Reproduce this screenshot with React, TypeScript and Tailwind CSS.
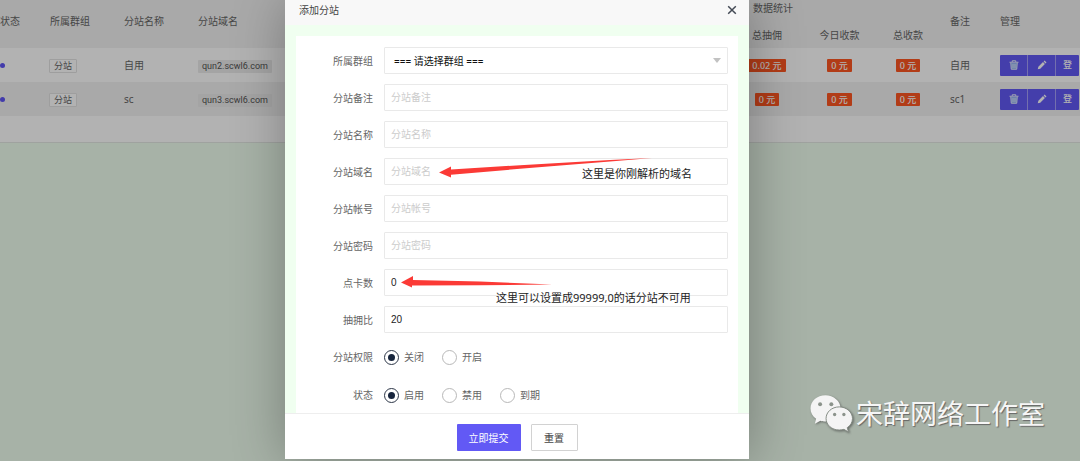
import React, { useState } from 'react';

const rows = [
	{ name: '自用', domain: 'qun2.scwl6.com', stats: ['0.02 元', '0 元', '0 元'], remark: '自用' },
	{ name: 'sc', domain: 'qun3.scwl6.com', stats: ['0 元', '0 元', '0 元'], remark: 'sc1' },
];

const fields = [
	{ id: 'remark', label: '分站备注', value: '' },
	{ id: 'name', label: '分站名称', value: '' },
	{ id: 'domain', label: '分站域名', value: '' },
	{ id: 'account', label: '分站帐号', value: '' },
	{ id: 'password', label: '分站密码', value: '' },
	{ id: 'points', label: '点卡数', value: '0' },
	{ id: 'rate', label: '抽拥比', value: '20' },
];

const radios = [
	{ id: 'access', label: '分站权限', options: ['关闭', '开启'] },
	{ id: 'status', label: '状态', options: ['启用', '禁用', '到期'] },
];

function TrashIcon() {
	return (
		<svg viewBox="0 0 20 20" className="size-[10px]" fill="none" stroke="#e4ecff" strokeWidth="2">
			<path d="M3.500 6h13l-1 12.500h-11z" fill="#8fb2f5" stroke="none" />
			<path d="M1 4.500h18M6.500 4V1.500h7V4M3.500 5l1 13.500h11l1-13.500M8 7.500v8.500M12 7.500v8.500" />
		</svg>
	);
}

function PencilIcon() {
	return (
		<svg viewBox="0 0 20 20" className="size-[10px]" fill="#fff">
			<path d="M1.500 18.500l1.200-5L12 4.200l3.800 3.800-9.300 9.300zM13.200 3l2-2 3.800 3.800-2 2z" />
		</svg>
	);
}

function SiteTable() {
	return (
		<div className="bg-white pb-[26px] border-b border-[#e4e8e4] overflow-hidden">
			<table className="w-full table-fixed -mt-[6px] text-left text-[10px] leading-4 text-[#666]">
				<colgroup>
					<col className="w-10" />
					<col className="w-[74px]" />
					<col className="w-[74px]" />
					<col />
					<col className="w-[74px]" />
					<col className="w-[71px]" />
					<col className="w-[66px]" />
					<col className="w-[50px]" />
					<col className="w-[90px]" />
				</colgroup>
				<thead className="bg-[#f2f2f2]">
					<tr className="h-[27px]">
						<th rowSpan={2} className="font-normal">状态</th>
						<th rowSpan={2} className="font-normal pl-[10px]">所属群组</th>
						<th rowSpan={2} className="font-normal pl-[10px]">分站名称</th>
						<th rowSpan={2} className="font-normal pl-[10px]">分站域名</th>
						<th colSpan={3} className="font-normal pl-6">数据统计</th>
						<th rowSpan={2} className="font-normal pl-[10px]">备注</th>
						<th rowSpan={2} className="font-normal pl-[10px]">管理</th>
					</tr>
					<tr className="h-[27px] text-center">
						<th className="font-normal pl-[2px]">总抽佣</th>
						<th className="font-normal pl-[2px]">今日收款</th>
						<th className="font-normal pl-[2px]">总收款</th>
					</tr>
				</thead>
				<tbody>
					{rows.map((row) => (
						<tr key={row.domain} className="h-[34px] even:bg-[#f2f2f2]">
							<td>
								<span className="block size-[5px] rounded-full bg-[#5f55f5]" />
							</td>
							<td className="pl-[9px]">
								<span className="inline-block rounded-[1px] border border-[#e2e2e2] bg-white px-1 text-[9px] leading-3">
									分站
								</span>
							</td>
							<td className="pl-[10px]">{row.name}</td>
							<td className="pl-[10px]">
								<span className="inline-block rounded-[1px] bg-[#ebebeb] px-1 font-['Roboto','Liberation_Sans',sans-serif] text-[9px] leading-[13px] text-[#555]">
									{row.domain}
								</span>
							</td>
							{row.stats.map((stat, i) => (
								<td key={i} className="pl-[2px] text-center">
									<span className="inline-block rounded-[1px] bg-[#ff5722] px-1 text-[9px] leading-[13px] font-medium text-white">
										{stat}
									</span>
								</td>
							))}
							<td className="pl-[10px]">{row.remark}</td>
							<td className="pl-[10px]">
								<div className="flex h-[21px] w-[79px] divide-x divide-[#a5a0fa] overflow-hidden rounded-[1px] bg-[#6259f5] text-[9px] text-white">
									<button aria-label="删除" className="flex w-7 items-center justify-center">
										<TrashIcon />
									</button>
									<button aria-label="编辑" className="flex w-7 items-center justify-center">
										<PencilIcon />
									</button>
									<button className="flex-1 font-medium">登</button>
								</div>
							</td>
						</tr>
					))}
				</tbody>
			</table>
		</div>
	);
}

// Hand drawn arrows and hints lying over the form
function Notes() {
	return (
		<div className="pointer-events-none absolute inset-0 text-[11px] leading-4 text-[#222]">
			<svg className="absolute left-0 top-0" width="464" height="300" viewBox="285 0 464 300" fill="#fb3a36">
				<path d="M439 172.5L451 166.500V169.600L520 165.200L610 160L652 158L610 161.600L520 168.800L451 174.800V177.500Z" />
				<path d="M401 282.500L413 276V280L480 281.600L552 284.600L480 285.200L412 285.400V287.600Z" />
			</svg>
			<span className="absolute left-[297px] top-[166px] whitespace-nowrap">这里是你刚解析的域名</span>
			<span className="absolute left-[211px] top-[290px] whitespace-nowrap">这里可以设置成99999,0的话分站不可用</span>
		</div>
	);
}

function SiteDialog() {
	const [values, setValues] = useState<{ [key: string]: string }>(
		Object.fromEntries(fields.map((f) => [f.id, f.value]))
	);
	const labelClass = 'w-[77px] shrink-0 text-right text-[#666]';
	const inputClass =
		"h-[27px] w-full rounded-[1px] border border-[#e9e9e9] bg-white px-[6px] font-['Liberation_Sans','Noto_Sans_CJK_SC',sans-serif] text-[#222] outline-none placeholder:text-[#ccc]";

	return (
		<form
			role="dialog"
			aria-labelledby="dialog-title"
			onSubmit={(e) => e.preventDefault()}
			className="relative w-full max-w-[464px] bg-white text-[10px] leading-4 shadow-[1px_1px_50px_rgba(0,0,0,0.3)]"
		>
			<header className="flex h-[25px] items-center justify-between bg-[#f8f8f8] pb-[5px] pl-[14px] pr-3">
				<h2 id="dialog-title" className="text-[#444]">添加分站</h2>
				<button type="button" aria-label="关闭窗口">
					<svg viewBox="0 0 10 10" className="size-[10px]" stroke="#444a55" strokeWidth="1.500">
						<path d="M1.200 1.200l7.600 7.600M8.800 1.200L1.200 8.800" />
					</svg>
				</button>
			</header>
			<div className="bg-[#f0fff0] px-[11px] pt-[11px]">
				<div className="flex flex-col gap-[10px] bg-white pt-[11px] pr-[10px] pb-1">
					<div className="flex items-center gap-[11px]">
						<label htmlFor="group" className={labelClass}>所属群组</label>
						<div className="relative flex-1">
							<select
								id="group"
								className="h-[27px] w-full appearance-none rounded-[1px] border border-[#e9e9e9] bg-white px-[9px] text-[#111] outline-none"
							>
								<option>=== 请选择群组 ===</option>
							</select>
							<svg viewBox="0 0 8 5" className="pointer-events-none absolute right-[7px] top-[11px] h-[5px] w-2" fill="#c2c2c2">
								<path d="M0 0h8L4 5z" />
							</svg>
						</div>
					</div>
					{fields.map((field) => (
						<div key={field.id} className="flex items-center gap-[11px]">
							<label htmlFor={field.id} className={labelClass}>{field.label}</label>
							<input
								id={field.id}
								placeholder={field.label}
								value={values[field.id]}
								onChange={(e) => setValues({ ...values, [field.id]: e.target.value })}
								className={inputClass}
							/>
						</div>
					))}
					{radios.map((group) => (
						<div key={group.id} role="radiogroup" aria-label={group.label} className="flex h-7 items-center gap-[11px]">
							<span className={labelClass}>{group.label}</span>
							<div className="flex gap-[18px]">
								{group.options.map((option, i) => (
									<label key={option} className="flex items-center gap-[5px] text-[#666]">
										<input
											type="radio"
											name={group.id}
											defaultChecked={i === 0}
											className="grid size-[15px] appearance-none place-content-center rounded-full border border-[#b8b8b8] before:size-[7px] before:rounded-full checked:border-[#2c3647] checked:before:bg-[#16243c]"
										/>
										{option}
									</label>
								))}
							</div>
						</div>
					))}
				</div>
			</div>
			<footer className="flex justify-center gap-[10px] border-t border-[#eee] pt-[10px] pb-2">
				<button type="submit" className="h-[27px] w-16 rounded-[1px] bg-[#6259f5] text-white">
					立即提交
				</button>
				<button type="reset" className="h-[27px] w-[47px] rounded-[1px] border border-[#d2d2d2] bg-white text-[#444]">
					重置
				</button>
			</footer>
			<Notes />
		</form>
	);
}

function Watermark() {
	return (
		<div className="absolute bottom-7 right-[35px] flex items-center gap-[2px] text-[#f6f6f6]">
			<svg viewBox="56 65 135 118" className="h-[39px] w-[45px] drop-shadow-[1px_1px_1px_rgba(60,60,60,0.6)]">
				<path
					d="M105 69C80 69 60 86 60 109c0 13 6 23 17 31l-4 15 17-9c5 2 10 2 16 2 25 0 45-17 45-39S130 69 105 69z"
					fill="#f4f4f4"
				/>
				<circle cx="89" cy="96" r="6" fill="#8b938b" />
				<circle cx="123" cy="96" r="6" fill="#8b938b" />
				<path
					d="M147 104c-23 0-40 16-40 35s17 35 40 35c5 0 10-1 14-2l14 8-4-13c10-7 16-16 16-28 0-19-18-35-40-35z"
					fill="#f4f4f4"
					stroke="#858d85"
					strokeWidth="3"
				/>
				<circle cx="133" cy="127" r="5" fill="#8b938b" />
				<circle cx="161" cy="127" r="5" fill="#8b938b" />
			</svg>
			<span className="text-[27px] leading-[38px] [text-shadow:1px_1px_1px_#666]">宋辞网络工作室</span>
		</div>
	);
}

export default function App() {
	return (
		<main className="relative min-h-screen overflow-hidden bg-[#f0fff0] font-['Noto_Sans','Noto_Sans_CJK_SC',sans-serif]">
			<SiteTable />
			<div className="absolute inset-0 flex items-start justify-center bg-black/30 pr-[46px]">
				<SiteDialog />
			</div>
			<Watermark />
		</main>
	);
}
